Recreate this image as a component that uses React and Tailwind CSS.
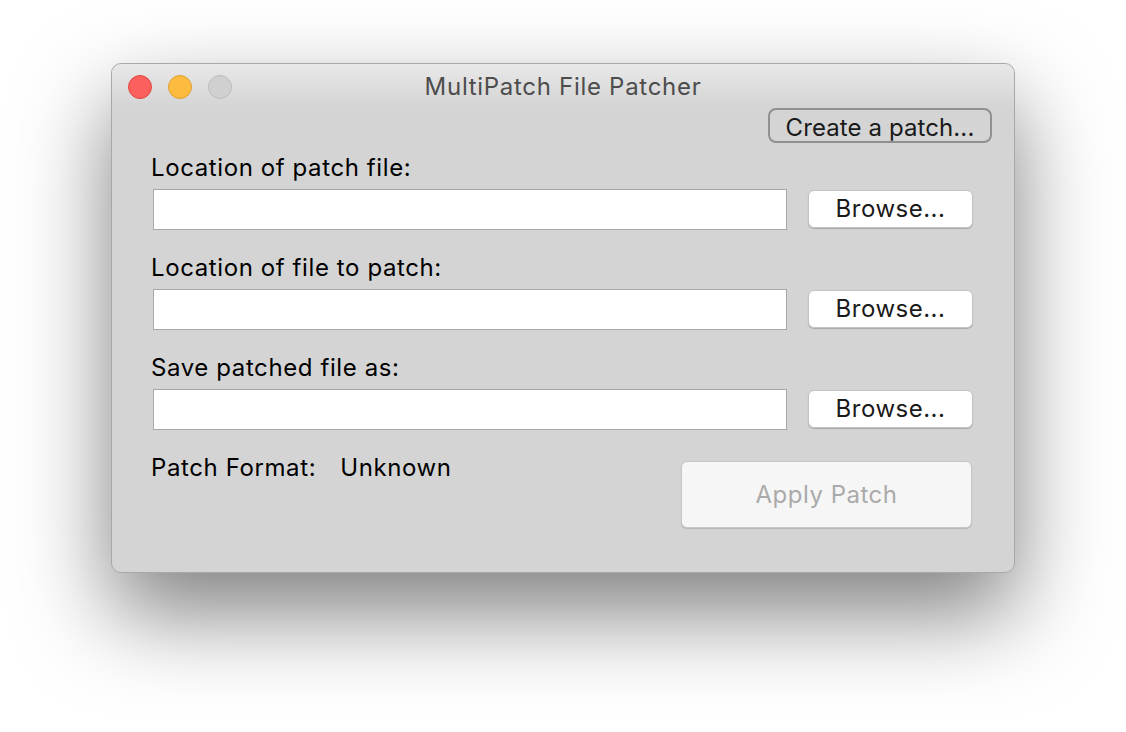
import { useState } from "react";

function BrowseRow({ label, value, onChange }) {
  return (
    <div className="flex flex-col">
      <div className="h-[28px] leading-[30px] text-[24px] tracking-[0.6px] text-black">{label}</div>
      <div className="flex items-start mt-[8px]">
        <input
          type="text"
          value={value}
          onChange={onChange}
          className="w-[634px] h-[41px] ml-[2px] bg-white border border-[#a7a7a7] outline-none px-2 text-[20px]"
        />
        <button className="ml-[21px] mt-[1px] w-[165px] h-[38px] bg-white rounded-[6px] border border-[#c4c4c4] shadow-[0_1px_1px_rgba(0,0,0,0.2)] text-[24px] tracking-[0.5px] text-[#1a1a1a]">
          Browse...
        </button>
      </div>
    </div>
  );
}

export default function App() {
  const [paths, setPaths] = useState({ patch: "", target: "", output: "" });

  const set = (key) => (e) => setPaths({ ...paths, [key]: e.target.value });

  return (
    <div
      className="min-h-[732px] bg-white flex justify-center pt-[63px]"
      style={{ fontFamily: "Inter, 'Noto Sans', sans-serif" }}
    >
      <div className="w-[904px] h-[510px] rounded-[10px] bg-[#d4d4d4] border border-[#a8a8a8] shadow-[0_40px_90px_rgba(0,0,0,0.5)] flex flex-col overflow-hidden">
        {/* Title bar */}
        <div className="h-[44px] relative flex items-center bg-gradient-to-b from-[#e8e8e8] to-[#d4d4d4]">
          <div className="flex items-center gap-[16px] pl-[16px] pt-[2px]">
            <span className="w-[24px] h-[24px] rounded-full bg-[#fc605c] border border-[#de4a45]" />
            <span className="w-[24px] h-[24px] rounded-full bg-[#fdbc40] border border-[#de9f34]" />
            <span className="w-[24px] h-[24px] rounded-full bg-[#d0d0d0] border border-[#bcbcbc]" />
          </div>
          <div className="absolute inset-x-0 top-0 h-[46px] flex items-center justify-center text-[24px] tracking-[0.7px] text-[#4d4d4d] pointer-events-none">
            MultiPatch File Patcher
          </div>
        </div>

        {/* Body */}
        <div className="flex flex-col px-[39px]">
          <div className="flex justify-end -mr-[17px]">
            <button className="w-[224px] h-[35px] rounded-[8px] border-2 border-[#909090] text-[24px] tracking-[0.1px] text-[#1a1a1a]">
              Create a patch...
            </button>
          </div>

          <div className="mt-[10px] flex flex-col gap-[23px]">
            <BrowseRow label="Location of patch file:" value={paths.patch} onChange={set("patch")} />
            <BrowseRow label="Location of file to patch:" value={paths.target} onChange={set("target")} />
            <BrowseRow label="Save patched file as:" value={paths.output} onChange={set("output")} />
          </div>

          <div className="flex items-start justify-between mt-[23px]">
            <div className="h-[28px] leading-[30px] text-[24px] tracking-[0.6px] text-black flex">
              <span>Patch Format:</span>
              <span className="ml-[24px]">Unknown</span>
            </div>
            <button
              disabled
              className="mt-[8px] mr-[3px] w-[291px] h-[67px] rounded-[6px] bg-[#f6f6f6] border border-[#c6c6c6] shadow-[0_1px_1px_rgba(0,0,0,0.15)] text-[24px] tracking-[0.5px] text-[#aaaaaa]"
            >
              Apply Patch
            </button>
          </div>
        </div>
      </div>
    </div>
  );
}
